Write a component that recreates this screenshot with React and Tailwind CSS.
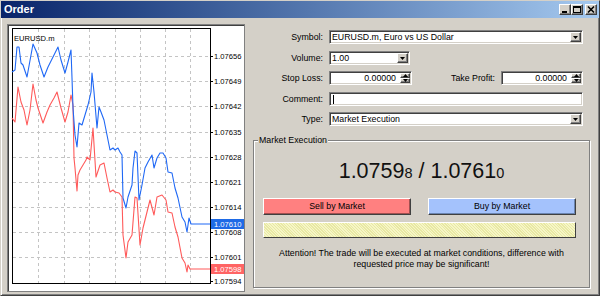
import React from "react";

const BLUE = [[12,72],[15,70],[17,47],[19,47],[21,63],[23,65],[27,77],[31,55],[33,44],[37,53],[40,65],[44,77],[48,67],[53,57],[58,47],[61,60],[65,73],[68,62],[71,50],[72,78],[73,108],[75,135],[77,147],[79,123],[82,125],[85,115],[88,105],[91,92],[92,73],[94,92],[97,128],[99,107],[101,112],[104,120],[107,135],[110,150],[113,148],[115,150],[118,148],[120,152],[122,155],[123,198],[126,208],[128,197],[132,185],[133,168],[135,151],[137,153],[139,200],[142,185],[145,168],[148,162],[152,155],[154,168],[157,158],[160,153],[163,153],[166,158],[168,172],[172,173],[175,188],[178,198],[182,217],[185,222],[187,232],[189,218],[191,224],[210,224]];
const RED = [[12,118],[15,122],[18,87],[21,102],[24,110],[27,125],[30,110],[33,84],[36,100],[38,108],[43,123],[47,112],[50,105],[54,98],[57,92],[61,108],[65,122],[68,112],[71,95],[73,105],[74,158],[75,168],[77,191],[78,175],[80,170],[83,165],[86,160],[87,157],[90,160],[93,128],[96,177],[100,165],[104,163],[107,178],[110,192],[113,190],[115,192],[119,193],[122,197],[123,235],[126,258],[128,242],[132,235],[135,197],[137,198],[140,245],[143,228],[147,212],[150,200],[154,215],[157,197],[162,195],[166,200],[168,212],[172,213],[175,227],[178,237],[182,258],[185,263],[187,272],[188,265],[190,269],[210,269]];
const pts = (a) => a.map((p) => p.join(",")).join(" ");

const VX = [38, 64, 89, 115, 140, 165, 190];
const HY = [56, 81, 106, 132, 157, 182, 207, 232, 257];
const LABELS = [["1.07656",56],["1.07649",81],["1.07642",106],["1.07635",132],["1.07628",157],["1.07621",182],["1.07614",207],["1.07608",232],["1.07601",257],["1.07594",281]];

function Chart() {
  const ff = "'Liberation Sans', Arial, sans-serif";
  return (
    <div className="ml-[6px] mt-[6px] w-[238px] h-[268px] bg-white border border-[#808080] shadow-[inset_1px_1px_0_#404040]">
      <svg width="236" height="266" viewBox="8 25 236 266" className="block">
        {VX.map((x) => (
          <line key={"v" + x} x1={x + 0.5} y1={29} x2={x + 0.5} y2={283} stroke="#c4c4c4" strokeDasharray="3 3" />
        ))}
        {HY.map((y) => (
          <line key={"h" + y} x1={13} y1={y + 0.5} x2={210} y2={y + 0.5} stroke="#c4c4c4" strokeDasharray="3 3" />
        ))}
        <rect x="12.5" y="28.5" width="198" height="255" fill="none" stroke="#000" />
        <text x="14" y="40.5" fontFamily={ff} fontSize="7.6" fill="#000">EURUSD.m</text>
        {LABELS.map(([t, y]) => (
          <g key={t}>
            <line x1={210} y1={y + 0.5} x2={213} y2={y + 0.5} stroke="#000" />
            <text x="214" y={y + 3} fontFamily={ff} fontSize="7.6" fill="#000">{t}</text>
          </g>
        ))}
        <polyline points={pts(RED)} fill="none" stroke="#ff5a5a" strokeWidth="1.1" strokeLinejoin="round" />
        <polyline points={pts(BLUE)} fill="none" stroke="#1f68f5" strokeWidth="1.1" strokeLinejoin="round" />
        <rect x="211" y="219" width="33" height="10" fill="#1e6ae6" />
        <text x="214" y="227" fontFamily={ff} fontSize="7.6" fill="#fff">1.07610</text>
        <rect x="211" y="264" width="33" height="10" fill="#ff6464" />
        <text x="214" y="272" fontFamily={ff} fontSize="7.6" fill="#fff">1.07598</text>
      </svg>
    </div>
  );
}

const sunken = "bg-white border border-t-[#808080] border-l-[#808080] border-b-white border-r-white shadow-[inset_1px_1px_0_#404040,inset_-1px_-1px_0_#d4d0c8]";
const raised = "bg-[#d4d0c8] border border-t-white border-l-white border-b-[#404040] border-r-[#404040] shadow-[inset_-1px_-1px_0_#808080]";

function DropBtn() {
  return (
    <div className={`w-[11px] my-[1px] mr-[1px] flex items-center justify-center ${raised}`}>
      <svg width="5" height="3" viewBox="0 0 5 3"><polygon points="0,0 5,0 2.5,3" fill="#000" /></svg>
    </div>
  );
}

function Spin() {
  return (
    <div className="w-[10px] my-[1px] mr-[1px] flex flex-col">
      <div className={`flex-1 flex items-center justify-center ${raised}`}>
        <svg width="5" height="3" viewBox="0 0 5 3"><polygon points="0,3 5,3 2.5,0" fill="#000" /></svg>
      </div>
      <div className={`flex-1 flex items-center justify-center ${raised}`}>
        <svg width="5" height="3" viewBox="0 0 5 3"><polygon points="0,0 5,0 2.5,3" fill="#000" /></svg>
      </div>
    </div>
  );
}

function Label({ children, w = "w-[70px]" }) {
  return <div className={`${w} shrink-0 text-right mr-[6px] leading-[14px]`}>{children}</div>;
}

export default function App() {
  return (
    <div className="w-[600px] h-[296px] bg-[#d4d0c8] border border-t-[#d4d0c8] border-l-[#d4d0c8] border-r-[#404040] border-b-[#404040] shadow-[inset_1px_1px_0_#ffffff,inset_-1px_-1px_0_#808080] flex flex-col overflow-hidden font-['Liberation_Sans',Arial,sans-serif] text-[8.8px] text-black">
      <div className="h-[17px] shrink-0 bg-linear-to-r from-[#0a246a] to-[#a6caf0] flex items-center pl-[3px] pr-[2px]">
        <span className="text-white font-bold text-[11px] leading-[17px]">Order</span>
        <div className="ml-auto flex items-center">
          <div className={`w-[12px] h-[11px] flex items-center justify-center ${raised}`}>
            <svg width="10" height="9" viewBox="0 0 10 9"><rect x="2" y="6" width="5" height="2" fill="#000" /></svg>
          </div>
          <div className={`w-[12px] h-[11px] flex items-center justify-center ${raised}`}>
            <svg width="10" height="9" viewBox="0 0 10 9"><rect x="1.5" y="1.5" width="7" height="6" fill="none" stroke="#000" /><rect x="1" y="1" width="8" height="2" fill="#000" /></svg>
          </div>
          <div className={`ml-[2px] w-[12px] h-[11px] flex items-center justify-center ${raised}`}>
            <svg width="10" height="9" viewBox="0 0 10 9"><path d="M2 1.5 L8 7.5 M8 1.5 L2 7.5" stroke="#000" strokeWidth="1.6" /></svg>
          </div>
        </div>
      </div>
      <div className="flex flex-1">
        <Chart />
        <div className="ml-[8px] w-[337px] flex flex-col">
          <div className="mt-[12px] h-[14px] flex">
            <Label>Symbol:</Label>
            <div className={`w-[254px] flex ${sunken}`}>
              <div className="flex-1 pl-[2px] leading-[12px]">EURUSD.m, Euro vs US Dollar</div>
              <DropBtn />
            </div>
          </div>
          <div className="mt-[7px] h-[14px] flex">
            <Label>Volume:</Label>
            <div className={`w-[81px] flex ${sunken}`}>
              <div className="flex-1 pl-[2px] leading-[12px]">1.00</div>
              <DropBtn />
            </div>
          </div>
          <div className="mt-[6px] h-[14px] flex">
            <Label>Stop Loss:</Label>
            <div className={`w-[83px] flex ${sunken}`}>
              <div className="flex-1 text-right pr-[4px] leading-[12px]">0.00000</div>
              <Spin />
            </div>
            <Label w="w-[83px]">Take Profit:</Label>
            <div className={`w-[82px] flex ${sunken}`}>
              <div className="flex-1 text-right pr-[4px] leading-[12px]">0.00000</div>
              <Spin />
            </div>
          </div>
          <div className="mt-[7px] h-[14px] flex">
            <Label>Comment:</Label>
            <div className={`w-[254px] flex items-center ${sunken}`}>
              <div className="ml-[3px] w-[1px] h-[9px] bg-black" />
            </div>
          </div>
          <div className="mt-[6px] h-[14px] flex">
            <Label>Type:</Label>
            <div className={`w-[254px] flex ${sunken}`}>
              <div className="flex-1 pl-[2px] leading-[12px]">Market Execution</div>
              <DropBtn />
            </div>
          </div>
          <div className="relative mt-[14px] h-[148px] w-[337px] border border-[#808080] shadow-[1px_1px_0_#ffffff,inset_1px_1px_0_#ffffff] flex flex-col">
            <div className="absolute left-[4px] top-[-6px] px-[1px] bg-[#d4d0c8] leading-[11px]">Market Execution</div>
            <div className="mt-[18px] h-[24px] flex items-baseline justify-center text-[#111]">
              <span className="text-[21.5px] leading-[24px]">1.0759</span>
              <span className="text-[14.5px] leading-[24px]">8</span>
              <span className="text-[21.5px] leading-[24px] whitespace-pre"> / 1.0761</span>
              <span className="text-[14.5px] leading-[24px]">0</span>
            </div>
            <div className="mt-[15px] ml-[9px] flex gap-[17px]">
              <div className="w-[148px] h-[17px] flex items-center justify-center bg-[#ff8080] border border-t-white border-l-white border-b-[#404040] border-r-[#404040] shadow-[inset_-1px_-1px_0_#a05050]">Sell by Market</div>
              <div className="w-[148px] h-[17px] flex items-center justify-center bg-[#a4c2fc] border border-t-white border-l-white border-b-[#404040] border-r-[#404040] shadow-[inset_-1px_-1px_0_#6a84b0]">Buy by Market</div>
            </div>
            <div className="mt-[7px] ml-[9px] w-[313px] h-[16px] border border-t-white border-l-white border-b-[#404040] border-r-[#404040] bg-[repeating-linear-gradient(45deg,#f6f6c6_0px,#f6f6c6_1px,#e8e8a4_1px,#e8e8a4_2px)]" />
            <div className="mt-[10px] text-center leading-[10.5px]">
              Attention! The trade will be executed at market conditions, difference with<br />requested price may be significant!
            </div>
          </div>
        </div>
      </div>
    </div>
  );
}
